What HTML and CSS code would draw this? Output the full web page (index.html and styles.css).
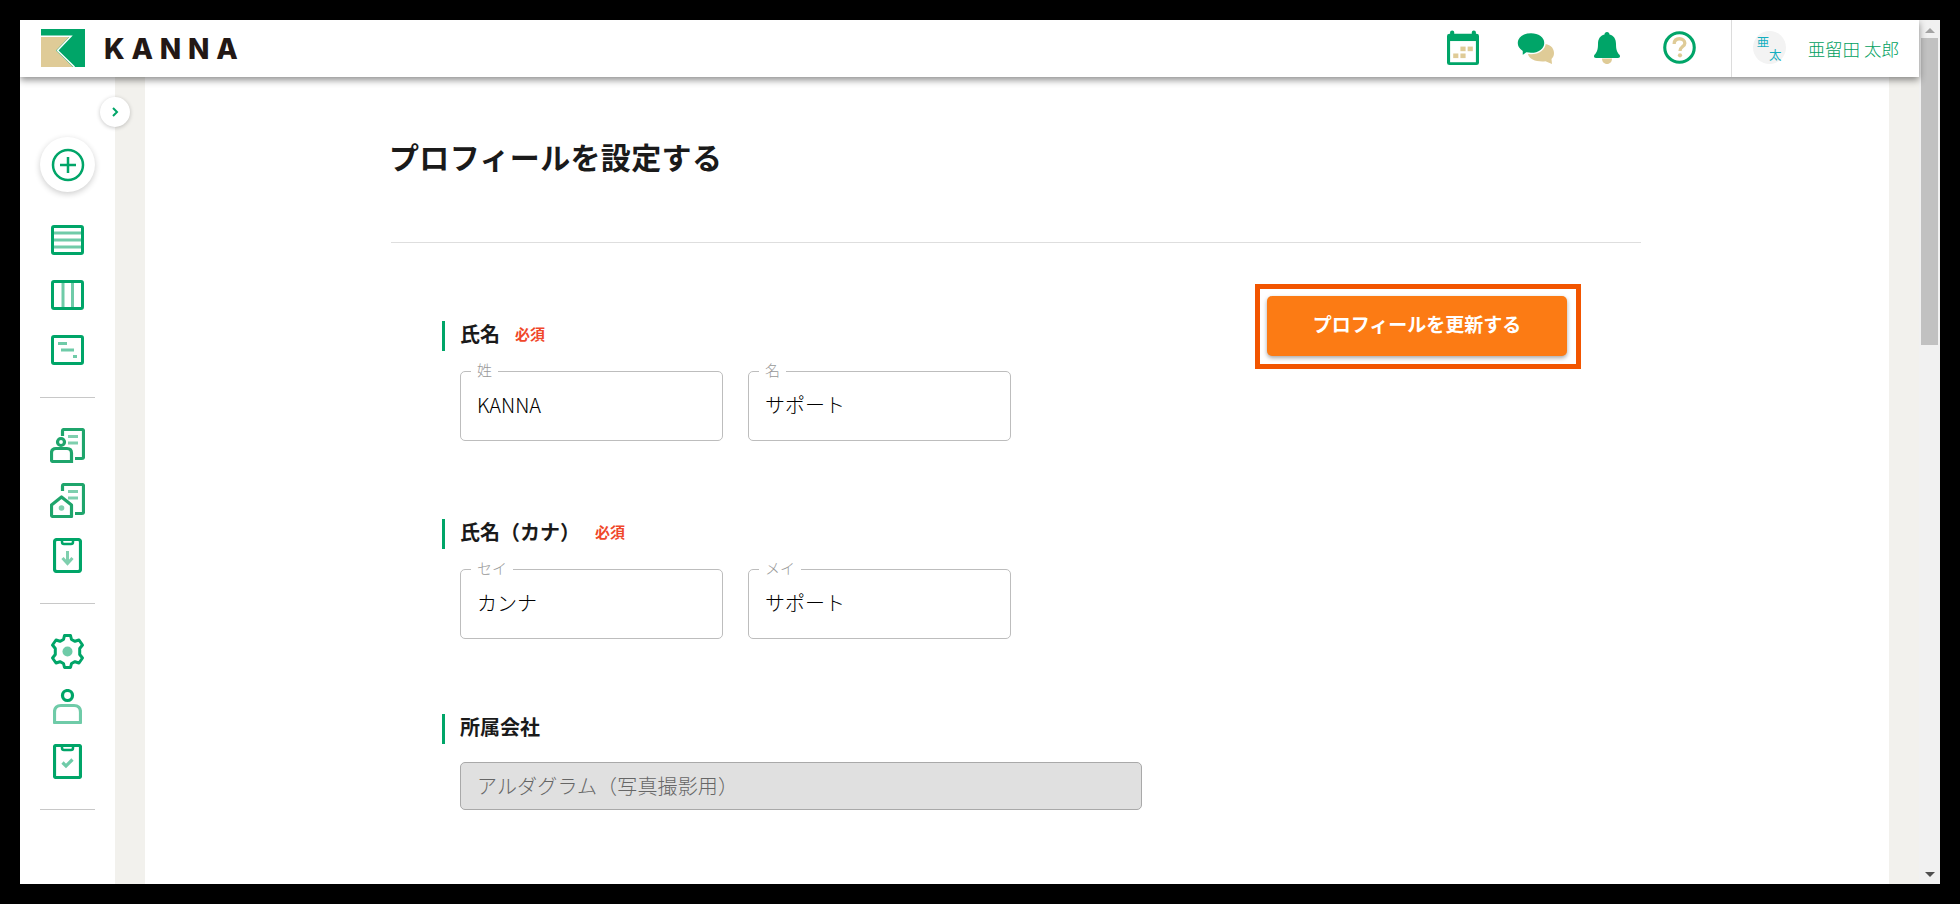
FILE: index.html
```html
<!DOCTYPE html>
<html lang="ja">
<head>
    <meta charset="UTF-8">
    <title>KANNA - プロフィールを設定する</title>
    <link rel="stylesheet" href="styles.css">
</head>
<body>
<div class="app">
    <div class="main">
        <header class="header">
            <div class="brand">
                <svg class="logo" width="44" height="38" viewBox="0 0 44 38">
                    <rect width="44" height="38" fill="#00a568"/>
                    <path d="M0 8H28L15 21.5L32 38H0Z" fill="#dfcb97"/>
                    <path d="M0 7.3H30L16.5 21.5L33.5 38" fill="none" stroke="#fff" stroke-width="1.5"/>
                </svg>
                <span class="brand-name">KANNA</span>
            </div>
            <div class="header-icons">
                <svg class="icon-calendar" width="32" height="35" viewBox="0 0 31 38" preserveAspectRatio="none">
                    <path d="M5 2.5V6M26 2.5V6" stroke="#00a568" stroke-width="4" stroke-linecap="round"/>
                    <rect y="4" width="31" height="34" rx="2.5" fill="#00a568"/>
                    <rect x="3" y="12" width="25" height="23" fill="#fff"/>
                    <g fill="#dfcb97">
                        <rect x="13" y="18" width="5" height="5"/>
                        <rect x="20" y="18" width="5" height="5"/>
                        <rect x="6" y="25.5" width="5" height="5"/>
                        <rect x="13" y="25.5" width="5" height="5"/>
                    </g>
                </svg>
                <svg class="icon-chat" width="37" height="32" viewBox="0 0 37 35" preserveAspectRatio="none">
                    <path d="M24 13C31 12 37 16 37 23C37 26 36 28 34.500 29.500L35 35L28.500 32C20 33 12 30 11 24Z" fill="#dfcb97"/>
                    <path d="M14 0.500C22 0.500 28 5.500 28 12C28 18.500 22 23.500 14 23.500C12.500 23.500 11 23.300 9.500 23L5 26.500L5 21C2 19 0 15.500 0 12C0 5.500 6 0.500 14 0.500Z" fill="#00a568" stroke="#fff" stroke-width="1.500"/>
                </svg>
                <svg class="icon-bell" width="26" height="32" viewBox="0 0 26 35" preserveAspectRatio="none">
                    <path d="M8 29H18C18 32.500 16 35 13 35C10 35 8 32.500 8 29Z" fill="#dfcb97"/>
                    <path d="M13 0C14.500 0 15.500 1 15.500 2.800C20 4 22 8 22 13C22 19 23 22 25.500 25C26.500 26.500 26 28.500 24 28.500H2C0 28.500 -0.500 26.500 0.500 25C3 22 4 19 4 13C4 8 6 4 10.500 2.800C10.500 1 11.500 0 13 0Z" fill="#00a568"/>
                </svg>
                <svg class="icon-help" width="33" height="33" viewBox="0 0 34 34">
                    <circle cx="17" cy="17" r="15.200" fill="none" stroke="#00a568" stroke-width="3.200"/>
                    <path d="M11.500 13.500C11.500 9.500 14 8 17 8C20 8 22.500 9.800 22.500 12.500C22.500 16 17.500 16 17.500 20.500" fill="none" stroke="#dfcb97" stroke-width="3.400"/>
                    <circle cx="17.500" cy="25" r="2.200" fill="#dfcb97"/>
                </svg>
            </div>
            <div class="user">
                <div class="avatar"><span>亜</span><span class="avatar-last">太</span></div>
                <span class="user-name">亜留田 太郎</span>
            </div>
        </header>

        <div class="body-row">
            <nav class="sidebar">
                <div class="add-btn">
                    <svg width="34" height="34" viewBox="0 0 34 34" fill="none" stroke="#00a568" stroke-width="2.500">
                        <circle cx="17" cy="17" r="15"/>
                        <path d="M17 9V25M9 17H25"/>
                    </svg>
                </div>

                <div class="nav-group">
                    <div class="nav-item">
                        <svg width="33" height="30" viewBox="0 0 33 30">
                            <path d="M3 8H30M3 15H30M3 22H30" stroke="#6fcba8" stroke-width="3"/>
                            <rect x="1.500" y="1.500" width="30" height="27" rx="1.500" fill="none" stroke="#00a568" stroke-width="3"/>
                        </svg>
                    </div>
                    <div class="nav-item">
                        <svg width="33" height="30" viewBox="0 0 33 30">
                            <path d="M12 3V27M21.500 3V27" stroke="#6fcba8" stroke-width="3"/>
                            <rect x="1.500" y="1.500" width="30" height="27" rx="1.500" fill="none" stroke="#00a568" stroke-width="3"/>
                        </svg>
                    </div>
                    <div class="nav-item">
                        <svg width="33" height="30" viewBox="0 0 33 30">
                            <path d="M7 8.500H16M10 15H23M22 21.500H26" stroke="#6fcba8" stroke-width="3"/>
                            <rect x="1.500" y="1.500" width="30" height="27" rx="1.500" fill="none" stroke="#00a568" stroke-width="3"/>
                        </svg>
                    </div>
                </div>

                <div class="nav-divider"></div>

                <div class="nav-group">
                    <div class="nav-item">
                        <svg width="35" height="35" viewBox="0 0 35 35" fill="none">
                            <path d="M12.500 8V3C12.500 2 13 1.500 14 1.500H32C33 1.500 33.500 2 33.500 3V29C33.500 30 33 30.500 32 30.500H25" stroke="#1fa56c" stroke-width="3.200"/>
                            <path d="M18 8.500H28M18 15H28" stroke="#7fcfae" stroke-width="3.200"/>
                            <circle cx="11" cy="14" r="3.500" stroke="#1fa56c" stroke-width="3.200"/>
                            <path d="M6 20.500H17C20 20.500 21.500 22 21.500 25V33.500H3C2 33.500 1.500 33 1.500 32V25C1.500 22 3 20.500 6 20.500Z" stroke="#1fa56c" stroke-width="3.200"/>
                        </svg>
                    </div>
                    <div class="nav-item">
                        <svg width="35" height="35" viewBox="0 0 35 35" fill="none">
                            <path d="M12.500 8V3C12.500 2 13 1.500 14 1.500H32C33 1.500 33.500 2 33.500 3V29C33.500 30 33 30.500 32 30.500H25" stroke="#1fa56c" stroke-width="3.200"/>
                            <path d="M18 8.500H28M18 15H28" stroke="#7fcfae" stroke-width="3.200"/>
                            <path d="M11.500 14L21.500 22V33.500H3C2 33.500 1.500 33 1.500 32V22Z" fill="#fff" stroke="#1fa56c" stroke-width="3.200" stroke-linejoin="round"/>
                            <circle cx="11.500" cy="25" r="2.800" fill="#7fcfae"/>
                        </svg>
                    </div>
                    <div class="nav-item">
                        <svg width="29" height="35" viewBox="0 0 29 35" fill="none">
                            <rect x="1.500" y="1.500" width="26" height="32" rx="2.500" stroke="#00a568" stroke-width="3.200"/>
                            <path d="M9 2V4C9 5 9.500 6 11 6H18C19.500 6 20 5 20 4V2" stroke="#00a568" stroke-width="2.500"/>
                            <path d="M14.500 13V25M9.500 20L14.500 25.500L19.500 20" stroke="#7fcfae" stroke-width="3"/>
                        </svg>
                    </div>
                </div>

                <div class="nav-divider"></div>

                <div class="nav-group">
                    <div class="nav-item">
                        <svg width="35" height="35" viewBox="0 0 35 35" fill="none">
                            <path d="M14.500 1.500H20.500L21.500 5.500L25 7.300L29 6L32.500 11L29.700 14.500V20.500L32.500 24L29 29L25 27.700L21.500 29.500L20.500 33.500H14.500L13.500 29.500L10 27.700L6 29L2.500 24L5.300 20.500V14.500L2.500 11L6 6L10 7.300L13.500 5.500Z" stroke="#00a568" stroke-width="3" stroke-linejoin="round"/>
                            <circle cx="17.500" cy="17.500" r="5" fill="#6fcba8"/>
                        </svg>
                    </div>
                    <div class="nav-item">
                        <svg width="29" height="35" viewBox="0 0 29 35" fill="none">
                            <circle cx="14.500" cy="6.500" r="5" stroke="#00a568" stroke-width="3.200"/>
                            <path d="M8 16.500H21C25 16.500 27.500 19 27.500 23V33.500H1.500V23C1.500 19 4 16.500 8 16.500Z" stroke="#6fcba8" stroke-width="3.200" stroke-linejoin="round"/>
                        </svg>
                    </div>
                    <div class="nav-item">
                        <svg width="29" height="35" viewBox="0 0 29 35" fill="none">
                            <rect x="1.500" y="1.500" width="26" height="32" rx="1.500" stroke="#00a568" stroke-width="3.200"/>
                            <path d="M9 2V4C9 5 9.500 6 11 6H18C19.500 6 20 5 20 4V2" stroke="#00a568" stroke-width="2.500"/>
                            <path d="M9.500 18.500L13 22L19.500 15.500" stroke="#6fcba8" stroke-width="3.200"/>
                        </svg>
                    </div>
                </div>

                <div class="nav-divider"></div>
            </nav>

            <div class="toggle">
                <svg width="8" height="10" viewBox="0 0 8 10" fill="none" stroke="#00a568" stroke-width="2">
                    <path d="M2 1L6 5L2 9"/>
                </svg>
            </div>

            <main class="content">
                <div class="page">
                    <h1 class="page-title">プロフィールを設定する</h1>
                    <div class="page-rule"></div>

                    <div class="form-row">
                        <div class="form">
                            <section class="section">
                                <h2 class="section-label">氏名<span class="required">必須</span></h2>
                                <div class="fields">
                                    <div class="field">
                                        <span class="field-label">姓</span>
                                        KANNA
                                    </div>
                                    <div class="field">
                                        <span class="field-label">名</span>
                                        サポート
                                    </div>
                                </div>
                            </section>

                            <section class="section section-kana">
                                <h2 class="section-label">氏名（カナ）<span class="required">必須</span></h2>
                                <div class="fields">
                                    <div class="field">
                                        <span class="field-label">セイ</span>
                                        カンナ
                                    </div>
                                    <div class="field">
                                        <span class="field-label">メイ</span>
                                        サポート
                                    </div>
                                </div>
                            </section>

                            <section class="section section-company">
                                <h2 class="section-label">所属会社</h2>
                                <div class="field-disabled">アルダグラム（写真撮影用）</div>
                            </section>
                        </div>

                        <div class="update-box">
                            <button class="update-btn">プロフィールを更新する</button>
                        </div>
                    </div>
                </div>
            </main>
        </div>
    </div>

    <div class="scrollbar">
        <div class="arrow-up"></div>
        <div class="thumb"></div>
        <div class="track"></div>
        <div class="arrow-down"></div>
    </div>
</div>
</body>
</html>
```

FILE: styles.css
```css
html, body {
    height: 100%;
}
body {
    margin: 0;
    padding: 20px;
    box-sizing: border-box;
    background-color: #000;
    font-family: "Noto Sans CJK JP", "Noto Sans", sans-serif;
    overflow: hidden;
}
.app {
    display: flex;
    height: 864px;
    background-color: #fff;
}
.main {
    flex: 1;
    display: flex;
    flex-direction: column;
    min-width: 0;
}

/* header */
.header {
    position: relative;
    z-index: 2;
    display: flex;
    align-items: center;
    height: 57px;
    flex-shrink: 0;
    background-color: #fff;
    box-shadow: 0 3px 7px rgba(0, 0, 0, 0.45);
}
.brand {
    display: flex;
    align-items: center;
    margin-left: 21px;
}
.logo {
    margin-top: -1px;
}
.brand-name {
    margin-left: 19px;
    font-family: "Inter", sans-serif;
    font-size: 28px;
    font-weight: 800;
    letter-spacing: 6.8px;
    color: #231815;
}
.header-icons {
    display: flex;
    align-items: center;
    margin-left: auto;
    margin-top: -2px;
}
.icon-chat {
    margin-left: 38px;
}
.icon-bell {
    margin-left: 40px;
}
.icon-help {
    margin-left: 43px;
}
.user {
    display: flex;
    align-items: center;
    height: 100%;
    margin-left: 35px;
    padding: 0 20px 0 21px;
    border-left: 1px solid #dcdcdc;
}
.avatar {
    display: grid;
    align-content: center;
    width: 33px;
    height: 33px;
    margin-top: -2px;
    padding: 0 4px;
    box-sizing: border-box;
    border-radius: 50%;
    background-color: #f3f3f3;
    font-size: 12.5px;
    line-height: 13px;
    color: #14aebf;
}
.avatar-last {
    justify-self: end;
}
.user-name {
    margin-left: 22px;
    font-size: 17.5px;
    font-weight: 300;
    white-space: nowrap;
    color: #00a060;
}

/* sidebar */
.body-row {
    position: relative;
    flex: 1;
    display: flex;
    min-height: 0;
    background-color: #f2f1ed;
    padding: 0 30px 0 0;
}
.sidebar {
    display: flex;
    flex-direction: column;
    align-items: center;
    width: 95px;
    flex-shrink: 0;
    margin-right: 30px;
    padding-top: 60px;
    box-sizing: border-box;
    background-color: #fff;
}
.add-btn {
    display: flex;
    align-items: center;
    justify-content: center;
    width: 55px;
    height: 55px;
    flex-shrink: 0;
    margin-bottom: 20px;
    border-radius: 50%;
    background-color: #fff;
    box-shadow: 0 2px 6px rgba(0, 0, 0, 0.2);
}
.nav-item {
    display: flex;
    align-items: center;
    justify-content: center;
    height: 55px;
}
.nav-divider {
    width: 55px;
    height: 1px;
    flex-shrink: 0;
    margin: 20px 0;
    background-color: #c8c8c8;
}
.toggle {
    position: absolute;
    left: 80px;
    top: 20px;
    display: flex;
    align-items: center;
    justify-content: center;
    width: 30px;
    height: 30px;
    border-radius: 50%;
    background-color: #fff;
    box-shadow: 0 1px 4px rgba(0, 0, 0, 0.22);
}

/* page */
.content {
    flex: 1;
    min-width: 0;
    overflow: hidden;
    background-color: #fff;
}
.page {
    width: 1250px;
    margin-left: 246px;
    padding-top: 59px;
}
.page-title {
    margin: 0 0 66px -2px;
    font-size: 30px;
    line-height: 40px;
    font-weight: 700;
    letter-spacing: 0.35px;
    color: #1a1a1a;
}
.page-rule {
    height: 1px;
    background-color: #dedede;
}
.form-row {
    display: flex;
    align-items: flex-start;
    margin-top: 41px;
}
.form {
    width: 700px;
    margin-left: 51px;
    padding-top: 37px;
}
.section-kana {
    margin-top: 78px;
}
.section-company {
    margin-top: 75px;
}
.section-label {
    display: flex;
    align-items: center;
    height: 30px;
    margin: 0;
    padding: 0 0 5px 15px;
    box-sizing: border-box;
    border-left: 3px solid #00a568;
    font-size: 20px;
    font-weight: 700;
    color: #1a1a1a;
}
.required {
    margin-left: 15px;
    font-size: 15px;
    color: #f0472a;
}
.fields {
    display: flex;
    gap: 25px;
    margin: 20px 0 0 18px;
}
.field {
    position: relative;
    display: flex;
    align-items: center;
    width: 263px;
    height: 70px;
    padding: 0 0 3px 16px;
    box-sizing: border-box;
    border: 1px solid #bdbdbd;
    border-radius: 5px;
    font-size: 20px;
    font-weight: 300;
    color: #000;
}
.field-label {
    position: absolute;
    left: 10px;
    top: -12px;
    padding: 0 6px;
    background-color: #fff;
    font-size: 15px;
    line-height: 20px;
    color: #999;
}
.field-disabled {
    display: flex;
    align-items: center;
    width: 682px;
    height: 48px;
    margin: 18px 0 0 18px;
    padding: 0 0 2px 16px;
    box-sizing: border-box;
    border: 1px solid #a9a9a9;
    border-radius: 5px;
    background-color: #e0e0e0;
    font-size: 20px;
    font-weight: 300;
    letter-spacing: 0.15px;
    color: #666;
}

/* update button with the orange outline */
.update-box {
    margin-left: 113px;
    padding: 7px 9px 8px 7px;
    border: 5px solid #f25500;
}
.update-btn {
    display: block;
    width: 300px;
    height: 60px;
    padding: 0 0 6px;
    border: none;
    border-radius: 5px;
    background-color: #fc7b14;
    box-shadow: 0 2px 4px rgba(0, 0, 0, 0.35);
    font-family: inherit;
    font-size: 19px;
    font-weight: 700;
    color: #fff;
}

/* scrollbar */
.scrollbar {
    display: flex;
    flex-direction: column;
    align-items: center;
    width: 21px;
    flex-shrink: 0;
    background-color: #f1f1f1;
}
.arrow-up {
    width: 0;
    height: 0;
    margin: 8px 0 5px;
    border-left: 5px solid transparent;
    border-right: 5px solid transparent;
    border-bottom: 5px solid #a3a3a3;
}
.thumb {
    width: 17px;
    height: 307px;
    background-color: #c1c1c1;
}
.track {
    flex: 1;
}
.arrow-down {
    width: 0;
    height: 0;
    margin-bottom: 7px;
    border-left: 5px solid transparent;
    border-right: 5px solid transparent;
    border-top: 5px solid #505050;
}
```
